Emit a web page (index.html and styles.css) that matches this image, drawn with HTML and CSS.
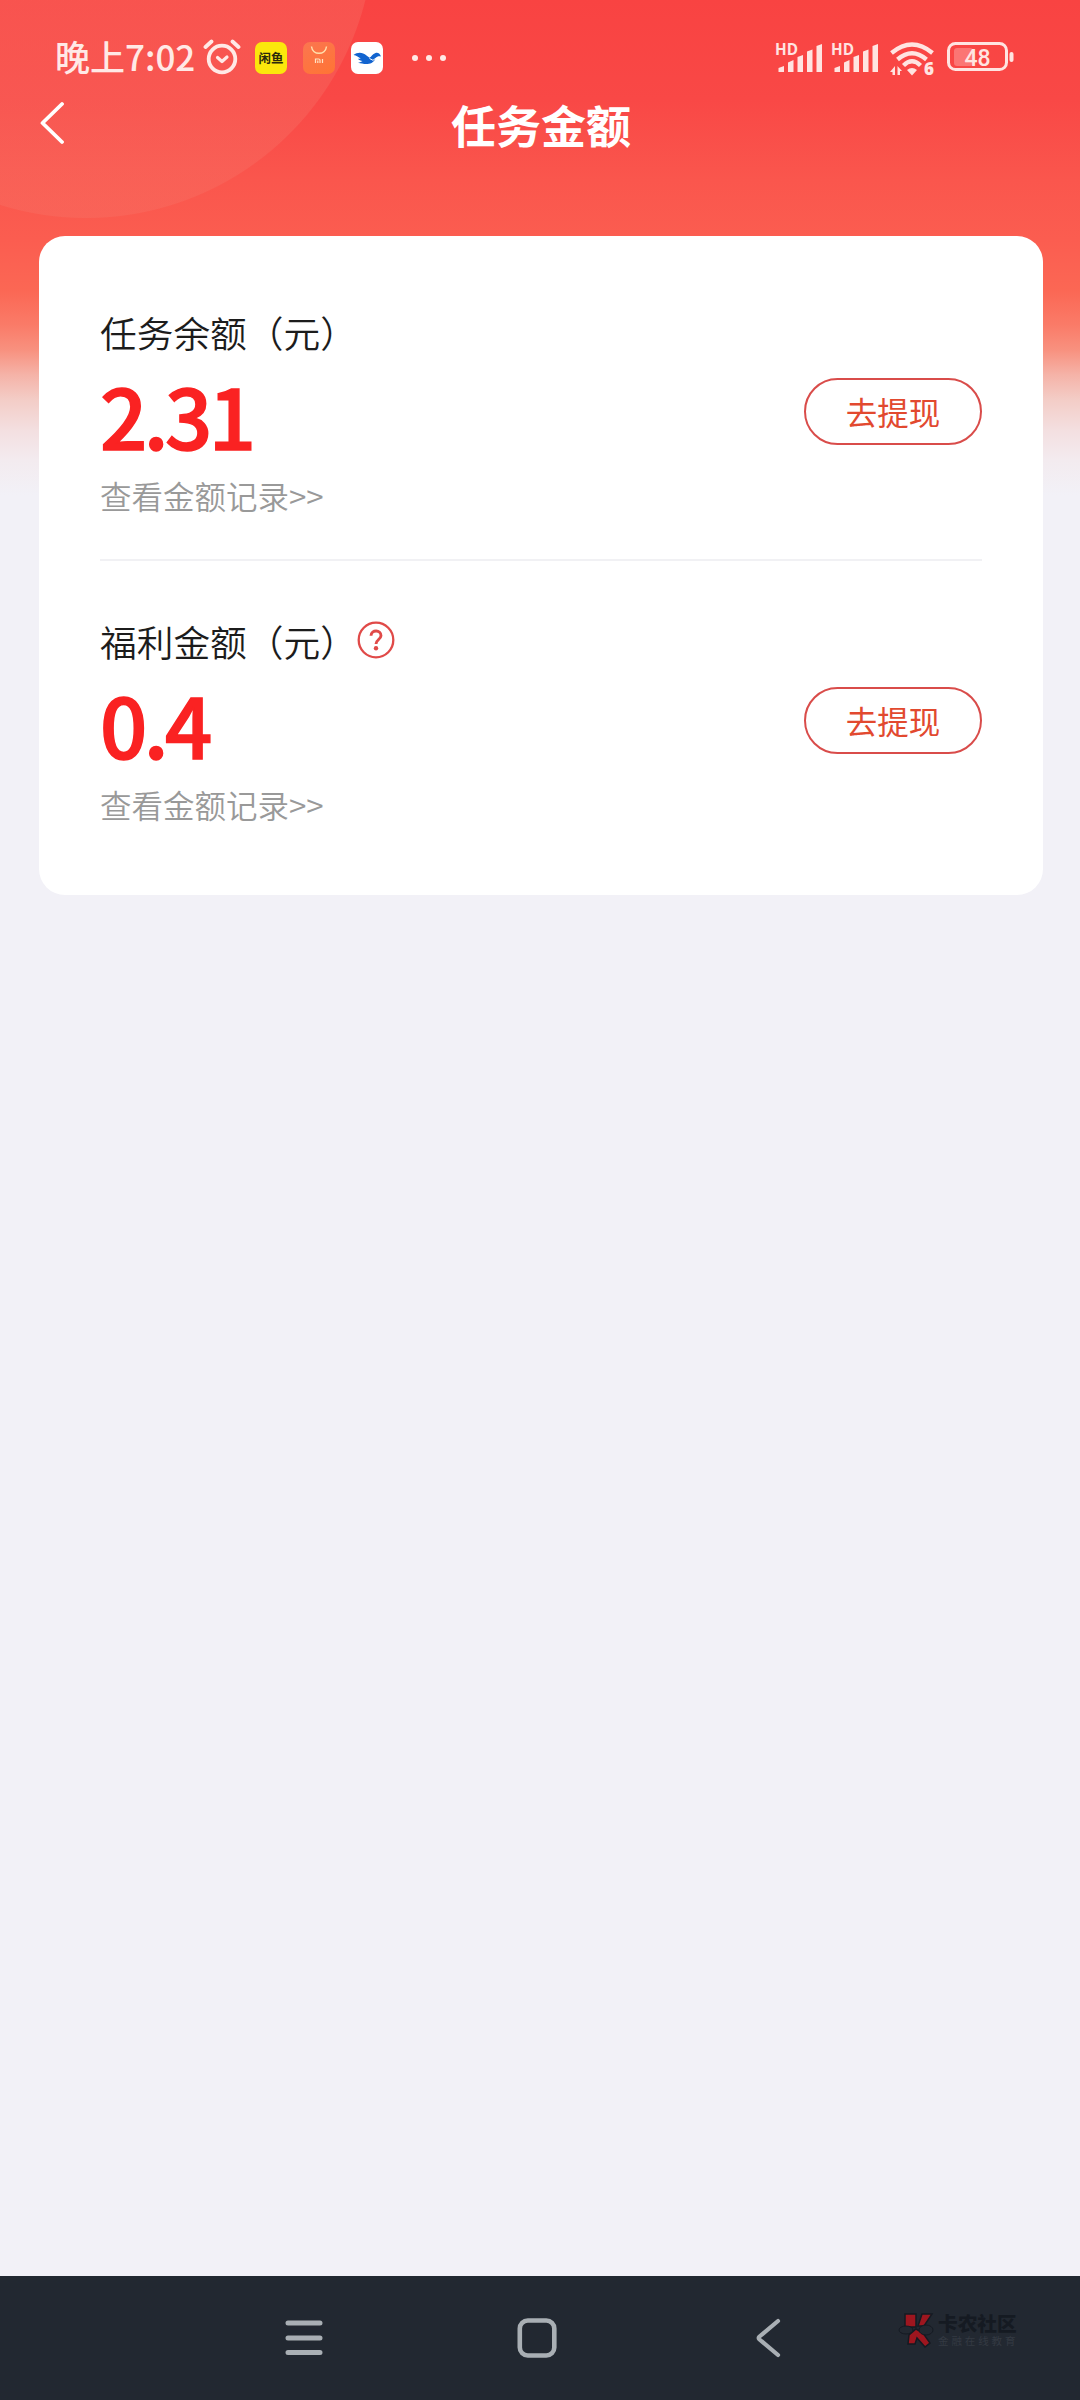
FILE: index.html
```html
<!DOCTYPE html>
<html lang="zh-CN">
<head>
<meta charset="utf-8">
<title>任务金额</title>
<link rel="stylesheet" href="styles.css">
</head>
<body>
<div class="screen">
  <header class="status-bar">
    <span class="clock">晚上7:02</span>
    <svg class="alarm" width="38" height="36" viewBox="0 0 38 36" fill="none" stroke="#ffe9e6" stroke-linecap="round" stroke-linejoin="round">
      <circle cx="19" cy="20" r="13.3" stroke-width="3.8"/>
      <path d="M14.5 18.5l4.5 4 5-4.5" stroke-width="3.2"/>
      <path d="M2.5 8l6-5.5M29.5 2.5l6 5.5" stroke-width="3.8"/>
    </svg>
    <div class="apps">
      <span class="app app-fish">闲鱼</span>
      <svg class="app app-store" viewBox="0 0 32 32" fill="none">
        <path d="M8.5 4.5c1 9 14 9 15 0" stroke="#ffe0ad" stroke-width="1.5"/>
        <path d="M12.5 21v-4h3.2q1.3 0 1.3 1.3V21M14.8 18.5V21M19.5 17v4" stroke="#ffe3c4" stroke-width="1.2"/>
      </svg>
      <svg class="app app-bird" viewBox="0 0 32 32">
        <path fill="#1264cf" d="M2.500 13c4-3 9-3 13 .5l3 2.300c2-1 3-4 6-4.800 3-.6 4.500 1 5.500 3.500-2-.7-4-.3-5 1.200-1.500 3-3 5.300-7 6-4 .7-7-.2-11-1 2-.5 3.500-1 4.500-1.800-2-.4-3.500-.8-4.500-2.200 1.200.2 2 .1 2.700-.2-2.200-1.500-4-3-7.200-3.500z"/>
        <path d="M18.500 16.500l3.500 1.800 3-2.300" fill="none" stroke="#fff" stroke-width="1"/>
      </svg>
    </div>
    <svg class="more" width="36" height="8" viewBox="0 0 36 8" fill="#ffe9e6"><circle cx="4" cy="4" r="3"/><circle cx="18" cy="4" r="3"/><circle cx="32" cy="4" r="3"/></svg>
    <svg class="system" width="244" height="40" viewBox="0 0 244 40" fill="#ffe4e1">
      <g id="sim">
        <text x="-1" y="15.500" class="hd" textLength="23" lengthAdjust="spacingAndGlyphs">HD</text>
        <path d="M2.500 33v-4l5.500-2v6zM12 33V23.500l5.500-2.500V33zM21.500 33V18l5.500-2V33zM31 33V12.500l5.500-2V33zM40.500 33V7l5.500-2V33z"/>
      </g>
      <use href="#sim" x="56"/>
      <g fill="none" stroke="#ffe4e1" stroke-width="4.300">
        <path d="M115.500 14Q136 -3 156.500 14"/>
        <path d="M121.500 20.500Q136 8 150.500 20.500"/>
        <path d="M127.500 26.500Q136 18 144.500 26.500"/>
      </g>
      <path d="M131 31q5-4 10 0l-5 5.500z"/>
      <path d="M119 27v9h-2.500v-3h-2.500zM121.500 36v-9l4.500 5h-2v4z"/>
      <text x="148" y="35.500" class="gen">6</text>
      <rect x="178" y="9" width="19" height="18" rx="3" fill-opacity=".3"/>
      <rect x="172.500" y="4.500" width="58" height="26" rx="7" fill="none" stroke="#ffe4e1" stroke-width="3"/>
      <rect x="233.500" y="13" width="4" height="10" rx="2"/>
      <text x="201.500" y="26.500" class="charge" text-anchor="middle">48</text>
    </svg>
  </header>
  <div class="title-bar">
    <svg class="back" width="26" height="44" viewBox="0 0 26 44" fill="none" stroke="#fff" stroke-width="3.800" stroke-linecap="round" stroke-linejoin="round"><path d="M24 3L4.500 22 24 41"/></svg>
    <h1 class="title">任务金额</h1>
  </div>
  <main class="card">
    <section class="account">
      <div class="info">
        <div class="label">任务余额（元）</div>
        <div class="amount">2.31</div>
        <div class="record">查看金额记录&gt;&gt;</div>
      </div>
      <button class="withdraw">去提现</button>
    </section>
    <section class="account">
      <div class="info">
        <div class="label">福利金额（元）<svg class="help" width="38" height="38" viewBox="0 0 38 38" fill="none" stroke="#e04a48">
          <circle cx="19" cy="19" r="17.300" stroke-width="2.300"/>
          <path d="M14 14.800c.2-6.500 10.300-6.200 10 0-.2 3.600-5 4-5 8.200" stroke-width="2.900"/><circle cx="19" cy="27.300" r="2.200" fill="#e04a48" stroke="none"/>
        </svg></div>
        <div class="amount">0.4</div>
        <div class="record">查看金额记录&gt;&gt;</div>
      </div>
      <button class="withdraw">去提现</button>
    </section>
  </main>
  <nav class="nav-bar">
    <svg class="nav-icon" width="40" height="40" viewBox="0 0 40 40" stroke="#a9afb4" stroke-width="5" stroke-linecap="round"><path d="M4 5h32M4 20h32M4 34.500h32"/></svg>
    <svg class="nav-icon" width="40" height="40" viewBox="0 0 40 40" fill="none" stroke="#a9afb4" stroke-width="4.600"><rect x="2.800" y="2.500" width="34.500" height="35" rx="8"/></svg>
    <svg class="nav-icon" width="40" height="40" viewBox="0 0 40 40" fill="none" stroke="#a9afb4" stroke-width="4.200" stroke-linecap="round" stroke-linejoin="round"><path d="M28 3L9.500 18.500q-1.500 1.500 0 3L28 37"/></svg>
    <div class="brand">
      <svg width="38" height="36" viewBox="0 0 38 36">
        <g fill="#9e161f" stroke="#151a22" stroke-width="1.500">
          <path d="M8 2h11v13H8zM25 2h10l-8 12h-6zM11 32l1-9 7-6 7 4 7 10-5 4-8-9-2 6z"/>
        </g>
        <ellipse cx="9" cy="18" rx="7" ry="4" fill="#222831" stroke="#151a22"/>
        <ellipse cx="29" cy="18" rx="7" ry="5" fill="#222831" stroke="#151a22"/>
      </svg>
      <div class="brand-text"><b class="brand-name">卡农社区</b><span class="brand-sub">金融在线教育</span></div>
    </div>
  </nav>
</div>
</body>
</html>
```
FILE: styles.css
```css
* { box-sizing: border-box; }
body {
  margin: 0;
  font-family: "Noto Sans CJK SC", sans-serif;
}
.screen {
  width: 1080px;
  height: 2400px;
  display: flex;
  flex-direction: column;
  overflow: hidden;
  background:
    radial-gradient(circle at 86px -70px, rgba(246, 118, 106, .32) 287.500px, transparent 288.500px) no-repeat 0 0 / 1080px 230px,
    linear-gradient(#f94342 0, #f94846 100px, #fa564d 180px, #fb5d50 240px, #fb6754 290px, #fa7b68 325px, #f8917f 350px, #f5b3a8 375px, #f3cdc7 400px, #f3dfe0 430px, #f3ebef 460px, #f2f1f7 495px);
}
.status-bar {
  height: 96px;
  padding: 34px 0 0 55px;
  display: flex;
  align-items: flex-start;
  color: #ffe9e6;
}
.clock {
  width: 147px;
  margin-top: -1px;
  font-size: 35px;
  line-height: 46px;
  font-weight: 500;
  white-space: nowrap;
}
.alarm { margin: 5px 0 0 1px; }
.apps {
  display: flex;
  gap: 16px;
  margin: 8px 0 0 14px;
}
.app {
  width: 32px;
  height: 32px;
  border-radius: 7px;
}
.app-fish {
  background: #fbe70c;
  color: #2b2a0c;
  font-size: 12.500px;
  line-height: 31px;
  font-weight: 700;
  text-align: center;
  white-space: nowrap;
}
.app-store { background: linear-gradient(150deg, #fb7650, #ff7434); }
.app-bird { background: #fff; }
.more { margin: 20px 0 0 28px; }
.system {
  flex: none;
  margin: 5px 0 0 329px;
  overflow: visible;
}
.hd { font: 700 15.500px "Open Sans", sans-serif; }
.gen { font: 800 17px "Open Sans", sans-serif; }
.charge { font: 500 23px Roboto, sans-serif; }
.title-bar {
  height: 140px;
  padding: 4px 40px 0 38px;
  display: flex;
  align-items: flex-start;
}
.back { margin-top: 1px; flex: none; }
.title {
  flex: 1;
  margin: -2px 0 0;
  padding-right: 22px;
  color: #fff;
  font-size: 45px;
  line-height: 54px;
  font-weight: 700;
  text-align: center;
}
.card {
  width: 1004px;
  height: 659px;
  margin-left: 39px;
  padding: 0 61px;
  border-radius: 26px;
  background: #fff;
}
.account {
  display: flex;
  justify-content: space-between;
  height: 323px;
  padding-top: 71px;
}
.account + .account {
  height: 310px;
  padding-top: 55px;
  border-top: 2px solid #f1f1f4;
}
.label {
  display: flex;
  align-items: center;
  height: 50px;
  color: #1c1c1c;
  font-size: 36.700px;
  line-height: 50px;
  font-weight: 350;
}
.help { margin: -3px 0 0 0; }
.amount {
  height: 80px;
  margin-top: 17px;
  color: #fa2222;
  font-size: 83px;
  line-height: 80px;
  font-weight: 500;
  letter-spacing: -3.500px;
  -webkit-text-stroke: 1.500px #fa2222;
}
.record {
  margin-top: 18px;
  color: #999;
  font-size: 31.500px;
  line-height: 46px;
  font-weight: 350;
}
.withdraw {
  width: 178px;
  height: 67px;
  margin: 71px 0 0;
  padding: 0;
  border: 2px solid #d94c4a;
  border-radius: 34px;
  background: #fff;
  color: #e2492f;
  font-family: inherit;
  font-size: 31.500px;
  line-height: 63px;
}
.nav-bar {
  height: 124px;
  margin-top: auto;
  padding: 42px 0 0 284px;
  display: flex;
  align-items: flex-start;
  gap: 193px;
  background: #222831;
}
.nav-icon { flex: none; }
.brand {
  display: flex;
  gap: 3px;
  margin: -6px 0 0 -86px;
}
.brand-text {
  display: flex;
  flex-direction: column;
  padding-top: 1px;
  white-space: nowrap;
}
.brand-name {
  color: #151a22;
  font-size: 19.700px;
  line-height: 20px;
  font-weight: 900;
}
.brand-sub {
  color: #343a43;
  font-size: 10.500px;
  line-height: 15px;
  letter-spacing: 2.900px;
}
```
